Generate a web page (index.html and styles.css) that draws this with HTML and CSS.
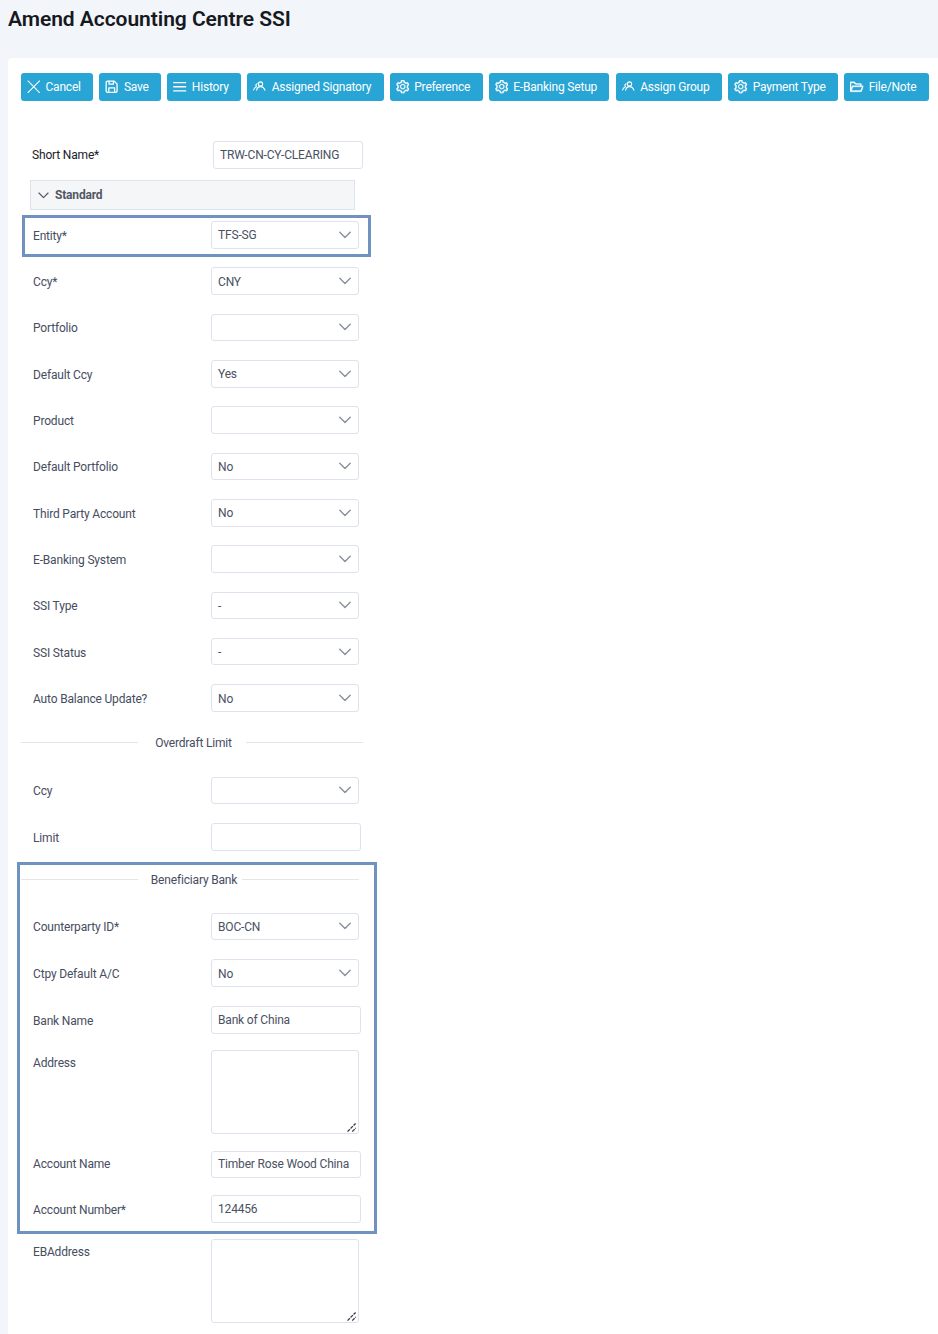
FILE: index.html
```html
<!DOCTYPE html>
<html lang="en">
<head>
<meta charset="utf-8">
<title>Amend Accounting Centre SSI</title>
<link rel="stylesheet" href="styles.css">
</head>
<body>
<svg class="defs" aria-hidden="true">
  <symbol id="i-close" viewBox="0 0 14 14"><path class="ln" d="M1 1l12 12M13 1 1 13"/></symbol>
  <symbol id="i-save" viewBox="0 0 14 14"><path class="ln bold" d="M2.6 1.2h7l2.9 2.9v7.3a1.4 1.4 0 0 1-1.4 1.4H2.6a1.4 1.4 0 0 1-1.4-1.4V2.6a1.4 1.4 0 0 1 1.4-1.4z"/><path class="ln bold" d="M4.2 1.4v2.8h4.6V1.4M4 12.6V8.2h6v4.4"/></symbol>
  <symbol id="i-menu" viewBox="0 0 14 14"><path class="ln bold" d="M.7 2.7h12.6M.7 7h12.6M.7 11.3h12.6"/></symbol>
  <symbol id="i-team" viewBox="0 0 14 14"><circle class="ln mid" cx="7.8" cy="4.1" r="2.2"/><path class="ln mid" d="M3.8 10.6c.4-2.2 2-3.7 4-3.7s3.7 1.5 4.6 3.7"/><path class="ln mid" d="M4.4 3.9a1.5 1.5 0 0 0-.8 2.7M3.2 7.2C1.8 7.7 1 8.8.7 10.2"/></symbol>
  <symbol id="i-gear" viewBox="64 64 896 896"><path class="gear" d="M924.8 625.7l-65.5-56c3.1-19 4.7-38.4 4.7-57.8s-1.6-38.8-4.7-57.8l65.5-56a32.03 32.03 0 009.3-35.2l-.9-2.6a443.74 443.74 0 00-79.7-137.9l-1.8-2.1a32.12 32.12 0 00-35.1-9.5l-81.3 28.9c-30-24.6-63.5-44-99.7-57.6l-15.7-85a32.05 32.05 0 00-25.8-25.7l-2.7-.5c-52.1-9.4-106.9-9.4-159 0l-2.7.5a32.05 32.05 0 00-25.8 25.7l-15.8 85.4a351.86 351.86 0 00-99 57.4l-81.9-29.1a32 32 0 00-35.1 9.5l-1.8 2.1a446.02 446.02 0 00-79.7 137.9l-.9 2.6c-4.5 12.5-.8 26.5 9.3 35.2l66.3 56.6c-3.1 18.8-4.6 38-4.6 57.1 0 19.2 1.5 38.4 4.6 57.1L99 625.5a32.03 32.03 0 00-9.3 35.2l.9 2.6c18.1 50.4 44.9 96.9 79.7 137.9l1.8 2.1a32.12 32.12 0 0035.1 9.5l81.9-29.1c29.8 24.5 63.1 43.9 99 57.4l15.8 85.4a32.05 32.05 0 0025.8 25.7l2.7.5a449.4 449.4 0 00159 0l2.7-.5a32.05 32.05 0 0025.8-25.7l15.7-85a350 350 0 0099.7-57.6l81.3 28.9a32 32 0 0035.1-9.5l1.8-2.1c34.8-41.1 61.6-87.5 79.7-137.9l.9-2.6c4.5-12.3.8-26.3-9.3-35zM788.3 465.9c2.5 15.1 3.8 30.6 3.8 46.1s-1.3 31-3.8 46.1l-6.6 40.1 74.7 63.9a370.03 370.03 0 01-42.6 73.6L721 702.8l-31.4 25.8c-23.9 19.6-50.5 35-79.3 45.8l-38.1 14.3-17.9 97a377.5 377.5 0 01-85 0l-17.9-97.2-37.8-14.5c-28.5-10.8-55-26.2-78.7-45.7l-31.4-25.9-93.4 33.2c-17-22.9-31.2-47.6-42.6-73.6l75.5-64.5-6.5-40c-2.4-14.9-3.7-30.3-3.7-45.5 0-15.3 1.2-30.6 3.7-45.5l6.5-40-75.5-64.5c11.3-26.1 25.6-50.7 42.6-73.6l93.4 33.2 31.4-25.9c23.7-19.5 50.2-34.9 78.7-45.7l37.9-14.3 17.9-97.2c28.1-3.2 56.8-3.2 85 0l17.9 97 38.1 14.3c28.7 10.8 55.4 26.2 79.3 45.8l31.4 25.8 92.8-32.9c17 22.9 31.2 47.6 42.6 73.6L781.8 426l6.5 39.9zM512 326c-97.2 0-176 78.8-176 176s78.8 176 176 176 176-78.8 176-176-78.8-176-176-176zm83.1 259.1A117.68 117.68 0 01512 620c-31.4 0-60.9-12.2-83.1-34.9-22.2-22.2-34.4-51.7-34.4-83.1s12.2-60.9 34.4-83.1c22.2-22.7 51.7-34.9 83.1-34.9s60.9 12.2 83.1 34.9c22.2 22.2 34.4 51.7 34.4 83.1s-12.2 60.9-34.4 83.1z"/></symbol>
  <symbol id="i-folder" viewBox="64 64 896 896"><path class="gear" d="M928 444H820V330.4c0-17.7-14.3-32-32-32H473L355.7 186.2a8.15 8.15 0 00-5.5-2.2H96c-17.7 0-32 14.3-32 32v592c0 17.7 14.3 32 32 32h698c13 0 24.8-7.9 29.7-20l134-332c1.5-3.8 2.3-7.9 2.3-12 0-17.7-14.3-32-32-32zM136 256h188.5l119.6 114.4H748V444H238c-13 0-24.8 7.9-29.7 20L136 643.2V256zm635.3 512H159l103.3-256h612.4L771.3 768z"/></symbol>
  <symbol id="i-down" viewBox="0 0 12 8"><path class="ln chevline" d="M.8 1.2 6 6.4l5.2-5.2"/></symbol>
  <symbol id="i-grip" viewBox="0 0 11 11"><path class="grip" d="M1.5 9.6 9.6 1.5M6.2 9.6l3.6-3.6"/></symbol>
</svg>

<h1 class="title">Amend Accounting Centre SSI</h1>

<main class="card">
  <div class="toolbar">
    <button class="btn" type="button"><svg class="ico"><use href="#i-close"/></svg>Cancel</button>
    <button class="btn" type="button"><svg class="ico"><use href="#i-save"/></svg>Save</button>
    <button class="btn" type="button"><svg class="ico"><use href="#i-menu"/></svg>History</button>
    <button class="btn" type="button"><svg class="ico"><use href="#i-team"/></svg>Assigned Signatory</button>
    <button class="btn" type="button"><svg class="ico"><use href="#i-gear"/></svg>Preference</button>
    <button class="btn" type="button"><svg class="ico"><use href="#i-gear"/></svg>E-Banking Setup</button>
    <button class="btn" type="button"><svg class="ico"><use href="#i-team"/></svg>Assign Group</button>
    <button class="btn" type="button"><svg class="ico"><use href="#i-gear"/></svg>Payment Type</button>
    <button class="btn" type="button"><svg class="ico"><use href="#i-folder"/></svg>File/Note</button>
  </div>

  <div class="short-row">
    <label class="short-label">Short Name*</label>
    <input class="input short-input" value="TRW-CN-CY-CLEARING">
  </div>

  <div class="panel-head"><svg class="panel-chev"><use href="#i-down"/></svg>Standard</div>

  <div class="rows standard-rows">
    <div class="row mark"><label class="label">Entity*</label><div class="select"><span>TFS-SG</span><svg class="chev"><use href="#i-down"/></svg></div></div>
    <div class="row"><label class="label">Ccy*</label><div class="select"><span>CNY</span><svg class="chev"><use href="#i-down"/></svg></div></div>
    <div class="row"><label class="label">Portfolio</label><div class="select"><span></span><svg class="chev"><use href="#i-down"/></svg></div></div>
    <div class="row"><label class="label">Default Ccy</label><div class="select"><span>Yes</span><svg class="chev"><use href="#i-down"/></svg></div></div>
    <div class="row"><label class="label">Product</label><div class="select"><span></span><svg class="chev"><use href="#i-down"/></svg></div></div>
    <div class="row"><label class="label">Default Portfolio</label><div class="select"><span>No</span><svg class="chev"><use href="#i-down"/></svg></div></div>
    <div class="row"><label class="label">Third Party Account</label><div class="select"><span>No</span><svg class="chev"><use href="#i-down"/></svg></div></div>
    <div class="row"><label class="label">E-Banking System</label><div class="select"><span></span><svg class="chev"><use href="#i-down"/></svg></div></div>
    <div class="row"><label class="label">SSI Type</label><div class="select"><span>-</span><svg class="chev"><use href="#i-down"/></svg></div></div>
    <div class="row"><label class="label">SSI Status</label><div class="select"><span>-</span><svg class="chev"><use href="#i-down"/></svg></div></div>
    <div class="row"><label class="label">Auto Balance Update?</label><div class="select"><span>No</span><svg class="chev"><use href="#i-down"/></svg></div></div>
  </div>

  <div class="divider overdraft"><span>Overdraft Limit</span></div>

  <div class="rows overdraft-rows">
    <div class="row"><label class="label">Ccy</label><div class="select"><span></span><svg class="chev"><use href="#i-down"/></svg></div></div>
    <div class="row"><label class="label">Limit</label><input class="input wide"></div>
  </div>

  <section class="bank">
    <div class="divider"><span>Beneficiary Bank</span></div>
    <div class="rows bank-rows">
      <div class="row"><label class="label">Counterparty ID*</label><div class="select"><span>BOC-CN</span><svg class="chev"><use href="#i-down"/></svg></div></div>
      <div class="row nudge"><label class="label">Ctpy Default A/C</label><div class="select"><span>No</span><svg class="chev"><use href="#i-down"/></svg></div></div>
      <div class="row"><label class="label">Bank Name</label><input class="input wide" value="Bank of China"></div>
      <div class="row row-top pull-3"><label class="label">Address</label><div class="area-wrap"><textarea class="area"></textarea><svg class="grip-ico"><use href="#i-grip"/></svg></div></div>
      <div class="row acct-name"><label class="label">Account Name</label><input class="input wide acct" value="Timber Rose Wood China"></div>
      <div class="row acct-number"><label class="label">Account Number*</label><input class="input wide" value="124456"></div>
    </div>
  </section>

  <div class="row row-top eb"><label class="label">EBAddress</label><div class="area-wrap"><textarea class="area"></textarea><svg class="grip-ico"><use href="#i-grip"/></svg></div></div>
</main>
</body>
</html>
```
FILE: styles.css
```css
*, *::before, *::after { box-sizing: border-box; }
html, body { height: 100%; }
body {
  margin: 0;
  height: 1334px;
  overflow: hidden;
  background: #f2f5f9;
  font-family: Roboto, "Liberation Sans", sans-serif;
  font-size: 12px;
  letter-spacing: -0.17px;
  color: #474d5f;
}
.defs { display: none; }
.ln { fill: none; stroke: currentColor; stroke-width: 1.1; stroke-linecap: round; stroke-linejoin: round; }
.mid { stroke-width: 1.15; }
.bold { stroke-width: 1.35; }
.chevline { stroke-width: 1.4; }
.gear { stroke: currentColor; stroke-width: 24; }
.grip { fill: none; stroke: #3c3f46; stroke-width: 1.3; stroke-dasharray: 3.4 .9; }

.title {
  margin: 0;
  padding: 8px 0 0 8px;
  height: 58px;
  font-size: 21px;
  line-height: 23px;
  font-weight: 600;
  letter-spacing: -0.05px;
  color: #17191f;
}
.card {
  margin-left: 8px;
  height: 1276px;
  padding: 15px 0 0 13px;
  background: #fff;
  border-radius: 4px 0 0 0;
}
.toolbar { display: flex; gap: 6.2px; }
.btn {
  display: inline-flex;
  align-items: center;
  gap: 5px;
  height: 28px;
  padding: 0 12.4px 0 6px;
  border: 0;
  border-radius: 3px;
  background: #28a5d5;
  color: #fff;
  font: 400 12px Roboto, sans-serif;
  letter-spacing: -0.2px;
  white-space: nowrap;
}
.ico { width: 13.5px; height: 13.5px; fill: currentColor; color: #fff; }

.short-row { display: flex; align-items: center; margin-top: 40px; padding-left: 11px; }
.short-label { width: 181px; color: #1d2028; }
.short-input { width: 150px; }

.input, .select, .area {
  border: 1px solid #dfe1ec;
  border-radius: 3px;
  background: #fff;
  font: 400 12px Roboto, sans-serif;
  letter-spacing: -0.17px;
  color: #4a5163;
}
.input { height: 28px; padding: 0 6px; outline: none; }
.wide { width: 150px; }
.acct { height: 27.4px; }
.select {
  display: flex;
  align-items: center;
  justify-content: space-between;
  width: 148px;
  height: 27.4px;
  padding: 0 7px 0 6px;
}
.select span { padding-top: 1px; }
.chev { width: 12px; height: 8px; color: #8a909e; }
.area-wrap { position: relative; width: 148px; height: 84px; }
.area { display: block; width: 148px; height: 84px; padding: 4px 6px; outline: none; resize: none; }
.grip-ico { position: absolute; right: 2px; bottom: 1px; width: 11px; height: 11px; }

.panel-head {
  display: flex;
  align-items: center;
  gap: 6px;
  width: 325px;
  height: 30px;
  margin: 11px 0 0 9px;
  padding-left: 7px;
  background: #f5f6f8;
  border: 1px solid #dde3ea;
  font-weight: 700;
  color: #525866;
}
.panel-chev { width: 11px; height: 7px; color: #525866; }

.rows { display: flex; flex-direction: column; gap: 18.95px; }
.standard-rows { margin-top: 11.15px; }
.overdraft-rows { margin-top: 24.6px; gap: 18.55px; }
.row { position: relative; display: flex; align-items: center; padding-left: 12px; }
.label { width: 178px; flex: none; color: #474d5f; padding-top: 2px; }
.row-top { align-items: flex-start; }
.row-top .label { padding-top: 6px; }
.mark::after {
  content: "";
  position: absolute;
  top: -6px;
  bottom: -8px;
  left: 1px;
  width: 349px;
  border: 3px solid #6f92bf;
  pointer-events: none;
}

.divider { display: flex; align-items: center; width: 342px; height: 20px; }
.divider::before, .divider::after { content: ""; flex: 1; height: 1px; background: #e4e5e8; }
.divider span { padding: 2px 14px 0 17px; color: #474d5f; }
.overdraft { margin-top: 20.4px; }

.bank {
  width: 360px;
  margin: 11px 0 0 -4px;
  padding: 4.5px 0 8px 1px;
  border: 3px solid #6f92bf;
}
.bank .divider { width: 338px; }
.bank .divider span { padding: 2px 5px 0 13px; }
.bank-rows { margin-top: 23.5px; gap: 19px; }
.nudge { margin-top: .2px; }
.pull-3 { margin-top: -3px; }
.acct-name { margin-top: -2px; }
.acct-name .label { padding-top: 0; }
.acct-number { margin-top: -2.4px; }
.acct-number .input { padding-top: 1px; }
.eb { margin-top: 5px; }
```
